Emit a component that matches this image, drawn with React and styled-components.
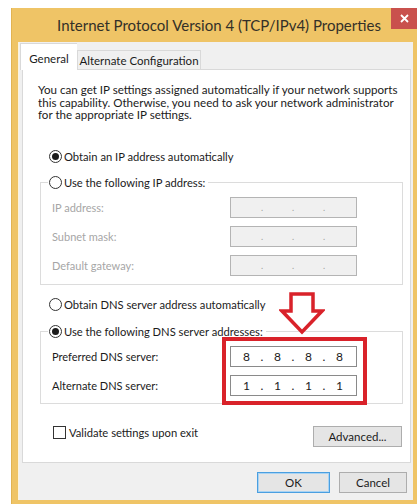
import React from 'react';
import styled, { createGlobalStyle } from 'styled-components';

const GlobalStyle = createGlobalStyle`
    html, body {
        margin: 0;
        padding: 0;
        background: #ffffff;
        overflow: hidden;
    }
    body {
        font-family: Lato, 'Noto Sans', sans-serif;
        color: #1b1b1b;
    }
`;

const Stage = styled.div`
    padding: 8px 0 0 11px;
`;

const Window = styled.div`
    width: 406px;
    height: 496px;
    background: #efc466;
    box-shadow: inset 1px 0 0 #e2b352;
    display: flex;
    flex-direction: column;
    box-sizing: border-box;
    padding-bottom: 4px;
`;

const TitleBar = styled.div`
    height: 34px;
    flex: none;
    display: flex;
    align-items: flex-start;
`;

const Title = styled.div`
    flex: 1;
    text-align: center;
    padding: 8px 0 0 36px;
    font-size: 15px;
    color: #333028;
    white-space: nowrap;
`;

const CloseBox = styled.div`
    width: 26px;
    height: 21px;
    background: #c9514d;
    color: #fff;
    display: flex;
    align-items: center;
    justify-content: center;
`;

const Body = styled.div`
    flex: 1;
    margin: 0 4px 0 7px;
    background: #f0f0f0;
    display: flex;
    flex-direction: column;
    padding: 1px 2px 0 4px;
    box-shadow: inset 1px 0 0 #fbf3de;
`;

const TabStrip = styled.div`
    display: flex;
    align-items: flex-end;
    height: 27px;
    margin-left: -2px;
    position: relative;
    z-index: 1;
`;

const Tab = styled.div`
    box-sizing: border-box;
    height: ${(p) => (p.$active ? 27 : 20)}px;
    width: ${(p) => p.$w}px;
    background: ${(p) => (p.$active ? '#ffffff' : '#f0f0f0')};
    border: 1px solid #d9d9d9;
    border-bottom: ${(p) => (p.$active ? 'none' : '1px solid #d9d9d9')};
    border-right: ${(p) => (p.$active ? 'none' : '1px solid #d9d9d9')};
    font-size: 11.5px;
    white-space: nowrap;
    display: flex;
    align-items: center;
    justify-content: center;
    padding-top: ${(p) => (p.$active ? 2 : 0)}px;
`;

const TabPage = styled.div`
    position: relative;
    height: 394px;
    box-sizing: border-box;
    background: #ffffff;
    border: 1px solid #d9d9d9;
    margin-top: -1px;
    display: flex;
    flex-direction: column;
`;

const Intro = styled.p`
    margin: 14px 10px 0 15px;
    font-size: 11.6px;
    line-height: 12.5px;
    white-space: nowrap;
`;

const OptionRow = styled.div`
    display: flex;
    align-items: center;
    height: 14px;
    margin: ${(p) => p.$mt}px 0 0 26px;
    font-size: 11.2px;
    gap: 2px;
`;

const RadioCircle = styled.span`
    box-sizing: border-box;
    width: 13px;
    height: 13px;
    border-radius: 50%;
    border: 1px solid #333333;
    background: #ffffff;
    display: flex;
    align-items: center;
    justify-content: center;
    flex: none;

    &::after {
        content: '';
        width: 7px;
        height: 7px;
        border-radius: 50%;
        background: ${(p) => (p.$checked ? '#1b1b1b' : 'transparent')};
    }
`;

const Group = styled.fieldset`
    margin: ${(p) => p.$mt}px 7px 0 17px;
    padding: 0 0 ${(p) => p.$pb}px 0;
    border: 1px solid #dcdcdc;
    min-width: 0;
`;

const Legend = styled.legend`
    margin-left: 7px;
    padding: 0 3px 0 1px;
    display: flex;
    align-items: center;
    height: 14px;
    gap: 2px;
    font-size: 11.2px;
`;

const FieldRow = styled.div`
    display: flex;
    align-items: center;
    height: 21px;
    margin-top: ${(p) => p.$mt}px;
    padding-left: 11px;
`;

const FieldLabel = styled.span`
    width: 178px;
    font-size: 11px;
    color: ${(p) => (p.$disabled ? '#a6a6a6' : '#1b1b1b')};
`;

const IpBox = styled.div`
    box-sizing: border-box;
    width: 127px;
    height: 21px;
    border: 1px solid ${(p) => (p.$disabled ? '#b4b4b4' : '#8a8a8a')};
    background: ${(p) => (p.$disabled ? '#f0f0f0' : '#ffffff')};
    display: grid;
    grid-template-columns: 27px 4px 27px 4px 27px 4px 27px;
    align-items: center;
    padding-left: 2px;
    font-size: 12px;
    color: ${(p) => (p.$disabled ? '#a0a0a0' : '#1b1b1b')};
`;

const Octet = styled.span`
    text-align: center;
`;

const Dot = styled.span`
    text-align: center;
    font-size: ${(p) => (p.$disabled ? 9 : 12)}px;
`;

const BottomRow = styled.div`
    display: flex;
    align-items: flex-start;
    justify-content: space-between;
    margin: 22px 8px 0 30px;
`;

const CheckLine = styled.label`
    display: flex;
    align-items: center;
    gap: 3px;
    font-size: 11.2px;
    height: 13px;
`;

const CheckBox = styled.span`
    box-sizing: border-box;
    width: 13px;
    height: 13px;
    border: 1px solid #333333;
    background: #ffffff;
`;

const Button = styled.div`
    box-sizing: border-box;
    width: ${(p) => p.$w}px;
    height: 21px;
    background: #e5e5e5;
    border: 1px solid ${(p) => (p.$default ? '#4a9fe0' : '#adadad')};
    box-shadow: ${(p) => (p.$default ? 'inset 0 0 0 1px #a9d3f3' : 'none')};
    font-size: 11.5px;
    display: flex;
    align-items: center;
    justify-content: center;
`;

const Footer = styled.div`
    flex: 1;
    display: flex;
    justify-content: flex-end;
    align-items: flex-start;
    gap: 9px;
    padding: 9px 6px 0 0;
    margin-right: -2px;
`;

const Highlight = styled.div`
    position: absolute;
    left: 199px;
    top: 267px;
    width: 145px;
    height: 68px;
    box-sizing: border-box;
    border: 4px solid #d9222a;
    pointer-events: none;
`;

const ArrowMark = styled.svg`
    position: absolute;
    left: 256px;
    top: 222px;
    width: 46px;
    height: 43px;
    pointer-events: none;
`;

const Radio = ({ checked }) => <RadioCircle $checked={checked} />;

const IpField = ({ parts, disabled }) => (
    <IpBox $disabled={disabled}>
        {[0, 1, 2, 3].map((i) => (
            <React.Fragment key={i}>
                <Octet>{parts ? parts[i] : ''}</Octet>
                {i < 3 && <Dot $disabled={disabled}>.</Dot>}
            </React.Fragment>
        ))}
    </IpBox>
);

const ipRows = ['IP address:', 'Subnet mask:', 'Default gateway:'];

const dnsRows = [
    { label: 'Preferred DNS server:', parts: ['8', '8', '8', '8'] },
    { label: 'Alternate DNS server:', parts: ['1', '1', '1', '1'] },
];

export default function App() {
    return (
        <Stage>
            <GlobalStyle />
            <Window>
                <TitleBar>
                    <Title>Internet Protocol Version 4 (TCP/IPv4) Properties</Title>
                    <CloseBox>
                        <svg width='9' height='9' viewBox='0 0 9 9'>
                            <path d='M1 1 L8 8 M8 1 L1 8' stroke='#fff' strokeWidth='1.8' />
                        </svg>
                    </CloseBox>
                </TitleBar>
                <Body>
                    <TabStrip>
                        <Tab $active $w={57}>General</Tab>
                        <Tab $w={124}>Alternate Configuration</Tab>
                    </TabStrip>
                    <TabPage>
                        <Intro>
                            You can get IP settings assigned automatically if your network supports
                            <br />
                            this capability. Otherwise, you need to ask your network administrator
                            <br />
                            for the appropriate IP settings.
                        </Intro>
                        <OptionRow $mt={28}>
                            <Radio checked />
                            Obtain an IP address automatically
                        </OptionRow>
                        <Group $mt={12} $pb={8}>
                            <Legend>
                                <Radio />
                                Use the following IP address:
                            </Legend>
                            {ipRows.map((label, i) => (
                                <FieldRow key={label} $mt={i === 0 ? 7 : 8}>
                                    <FieldLabel $disabled>{label}</FieldLabel>
                                    <IpField disabled />
                                </FieldRow>
                            ))}
                        </Group>
                        <OptionRow $mt={13}>
                            <Radio />
                            Obtain DNS server address automatically
                        </OptionRow>
                        <Group $mt={13} $pb={7}>
                            <Legend>
                                <Radio checked />
                                Use the following DNS server addresses:
                            </Legend>
                            {dnsRows.map((row, i) => (
                                <FieldRow key={row.label} $mt={i === 0 ? 7 : 8}>
                                    <FieldLabel>{row.label}</FieldLabel>
                                    <IpField parts={row.parts} />
                                </FieldRow>
                            ))}
                        </Group>
                        <BottomRow>
                            <CheckLine>
                                <CheckBox />
                                Validate settings upon exit
                            </CheckLine>
                            <Button $w={89}>Advanced...</Button>
                        </BottomRow>
                        <Highlight />
                        <ArrowMark viewBox='0 0 46 43'>
                            <path
                                d='M12 2 H34 V19 H43 L23 40 L3 19 H12 Z'
                                fill='#ffffff'
                                stroke='#d9222a'
                                strokeWidth='3.5'
                                strokeLinejoin='miter'
                            />
                        </ArrowMark>
                    </TabPage>
                    <Footer>
                        <Button $default $w={73}>OK</Button>
                        <Button $w={68}>Cancel</Button>
                    </Footer>
                </Body>
            </Window>
        </Stage>
    );
}
